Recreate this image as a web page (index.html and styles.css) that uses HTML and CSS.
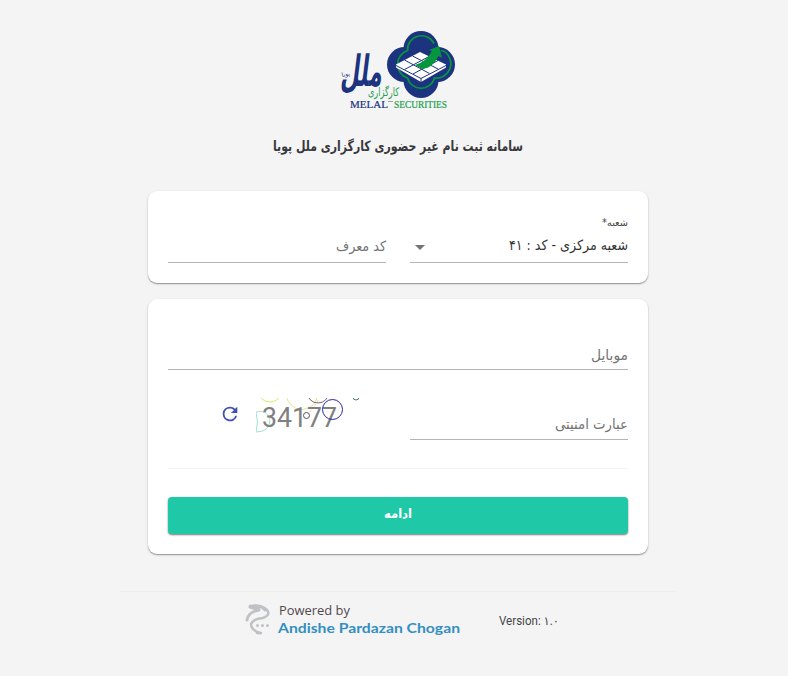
FILE: index.html
```html
<!DOCTYPE html>
<html lang="fa" dir="rtl">
<head>
<meta charset="utf-8">
<title>سامانه ثبت نام غیر حضوری</title>
<link rel="stylesheet" href="styles.css">
</head>
<body>
<main class="page">
  <header class="header">
    <svg class="logo" viewBox="0 0 116 80" width="116" height="80" direction="ltr">
      <g fill="#1c3480">
        <circle cx="81" cy="18.500" r="17.500"/><circle cx="64.500" cy="34.500" r="17.500"/><circle cx="97.500" cy="34.500" r="17.500"/><circle cx="81" cy="50.500" r="17.500"/>
        <rect x="65" y="19" width="32" height="32"/>
      </g>
      <path d="M94 13.500A14 14 0 0 0 67.500 20.500A14.500 14.500 0 0 0 67.500 48A14 14 0 0 0 94.500 48A14.500 14.500 0 0 0 110 29Q107 21 101 20.500" fill="none" stroke="#06963e" stroke-width="1.700"/>
      <path d="M56 34.500L80 22L106 34.500V37.500L81 52L56 37.500Z" fill="#fff"/>
      <path d="M64.500 30L89.500 43.500M72.500 26L98 39M64.500 39.500L89 26.500M73 44L98 30.500M56 35.500L81 48.500L106 35.500M81 48.500V52" stroke="#1c3480" stroke-width="1" fill="none"/>
      <path d="M75 35Q86 32 92 21L89 20L99 16L102 28L98.500 26Q92 39 82 39Z" fill="#06963e"/>
      <text class="logo-mark" transform="translate(0 56) skewX(-7) scale(.85 1.600)" textLength="49" lengthAdjust="spacingAndGlyphs">ملل</text>
      <text class="logo-sub" x="2" y="47" transform="rotate(-12 2 47)">پویا</text>
      <text class="logo-broker" x="28" y="66" textLength="31" lengthAdjust="spacingAndGlyphs">کارگزاری</text>
      <text class="logo-latin blue" x="10" y="78" textLength="38" lengthAdjust="spacingAndGlyphs">MELAL</text>
      <text class="logo-latin green" x="54" y="78" textLength="53" lengthAdjust="spacingAndGlyphs">SECURITIES</text>
      <path d="M48 71.500h5" stroke="#8c91a0" stroke-width=".8"/>
    </svg>
    <h1 class="title"><svg width="252" height="28" direction="ltr"><text x="1" y="18" textLength="250" lengthAdjust="spacingAndGlyphs">سامانه ثبت نام غیر حضوری کارگزاری ملل پویا</text></svg></h1>
  </header>

  <section class="card branch-card">
    <div class="field">
      <svg class="label" width="28" height="18" direction="rtl"><text x="28" y="13" textLength="26" lengthAdjust="spacingAndGlyphs">شعبه*</text></svg>
      <div class="control">
        <svg width="120" height="26" direction="rtl"><text x="120" y="17" textLength="119" lengthAdjust="spacingAndGlyphs">شعبه مرکزی - کد : ۴۱</text></svg>
        <i class="arrow"></i>
      </div>
    </div>
    <div class="field">
      <div class="control hint"><svg width="50" height="26" direction="ltr"><text x="0" y="18" textLength="50" lengthAdjust="spacingAndGlyphs">کد معرف</text></svg></div>
    </div>
  </section>

  <section class="card login-card">
    <div class="control hint"><svg width="38" height="26" direction="ltr"><text x="1" y="18" textLength="37" lengthAdjust="spacingAndGlyphs">موبایل</text></svg></div>
    <div class="security">
      <div class="control hint"><svg width="73" height="26" direction="ltr"><text x="0" y="17" textLength="73" lengthAdjust="spacingAndGlyphs">عبارت امنیتی</text></svg></div>
      <div class="captcha">
        <svg class="refresh" width="22" height="22" viewBox="0 0 24 24"><path fill="#3f51b5" d="M17.650 6.350A7.960 7.960 0 0 0 12 4a8 8 0 1 0 7.730 10h-2.080A6 6 0 1 1 12 6c1.660 0 3.140.690 4.220 1.780L13 11h7V4z"/></svg>
        <svg class="captcha-art" width="120" height="38" viewBox="0 0 120 38">
          <g fill="none">
            <circle cx="14" cy="-8" r="12" stroke="#d3ec6b"/>
            <circle cx="46" cy="-4" r="15.500" stroke="#dfec8d"/>
            <circle cx="62" cy="-6" r="11" stroke="#806471"/>
            <path d="M0 14Q10 11 14 21Q14 34 0 34Q3 24 0 14" stroke="#a4e2cd"/>
            <path d="M54 14L63 1" stroke="#f4c0a0" stroke-dasharray="2 2"/>
            <circle cx="100" cy="-1" r="3" stroke="#55717c"/>
          </g>
          <text x="6" y="29" class="captcha-code" textLength="75" lengthAdjust="spacingAndGlyphs">34177</text>
          <circle cx="50.500" cy="17.500" r="3" fill="none" stroke="#555"/>
          <circle cx="76.500" cy="11.500" r="10" fill="none" stroke="#2525a8"/>
        </svg>
      </div>
    </div>
    <hr class="divider">
    <button class="submit"><svg width="30" height="24" direction="ltr"><text x="1" y="16" textLength="28" lengthAdjust="spacingAndGlyphs">ادامه</text></svg></button>
  </section>

  <footer class="footer" dir="ltr">
    <svg class="brand" width="216" height="36" viewBox="0 0 216 36">
      <g fill="none" stroke="#bfc1c6" stroke-linecap="round" stroke-linejoin="round">
        <path d="M5 4Q16 2 22 8Q26 13 18 16Q8 17 6 22Q6 28 15 31" stroke-width="2.500"/>
        <path d="M2 18Q3 10 14 8L5 5L17 5L20 8" stroke-width="3"/>
        <path d="M12 31h4" stroke-width="2.500"/>
      </g>
      <g fill="#bfc1c6"><circle cx="12.500" cy="23.500" r="1.500"/><circle cx="17.500" cy="23.500" r="1.500"/><circle cx="22.500" cy="23.500" r="1.500"/></g>
      <text class="powered" x="34" y="13" textLength="71" lengthAdjust="spacingAndGlyphs">Powered by</text>
      <text class="company" x="33" y="31" textLength="182" lengthAdjust="spacingAndGlyphs">Andishe Pardazan Chogan</text>
    </svg>
    <svg class="version" width="62" height="20"><text x="0" y="13" textLength="60" lengthAdjust="spacingAndGlyphs">Version: ۱.۰</text></svg>
  </footer>
</main>
</body>
</html>
```
FILE: styles.css
```css
* { box-sizing: border-box; }
body { margin: 0; background: #f4f4f4; font-family: Roboto, "DejaVu Sans", sans-serif; color: #333; }
svg { display: block; overflow: visible; }
svg text { fill: currentColor; }
.page { width: 556px; height: 676px; margin-left: auto; margin-right: 112px; }
.header { height: 191px; padding-top: 30px; display: flex; flex-direction: column; align-items: center; }
.title { margin: 23px 0 0; color: #38383d; font: bold 14px "DejaVu Sans", sans-serif; }
.card { width: 500px; margin: 0 auto; padding: 0 20px; background: #fff; border-radius: 9px; box-shadow: 0 1px 1px #777a, 0 1px 3px #0002; }
.branch-card { height: 92px; display: flex; gap: 24px; }
.field { width: 218px; height: 72px; display: flex; flex-direction: column; justify-content: flex-end; }
.label { margin-bottom: 2px; color: #444; font: 10px "DejaVu Sans", sans-serif; }
.control { width: 100%; height: 30px; display: flex; align-items: flex-start; justify-content: space-between; border-bottom: 1px solid #b5b5b5; font: 14px "DejaVu Sans", sans-serif; }
.hint { color: #737373; }
.arrow { margin: 12px 0 0 5px; border-left: 5px solid transparent; border-right: 5px solid transparent; border-top: 5px solid #757575; }
.login-card { height: 255px; margin-top: 16px; padding-top: 43px; }
.login-card > .control { height: 28px; }
.security { height: 70px; display: flex; gap: 24px; align-items: flex-end; }
.security > .control { width: 218px; height: 28px; }
.captcha { width: 218px; height: 42px; display: flex; direction: ltr; align-items: flex-start; padding-left: 51px; }
.refresh { margin: 5px 15px 0 0; }
.captcha-art { overflow: hidden; }
.captcha-code { font: 28px Roboto, sans-serif; fill: #808080; }
.divider { height: 1px; margin: 28px 0; border: 0; background: #f4f4f4; }
.submit { width: 100%; height: 37px; padding: 5px 0 0; display: flex; justify-content: center; align-items: flex-start; border: 0; border-radius: 4px; background: #1fc8a7; color: #fff; box-shadow: 0 1px 2px #0008; font: bold 13px "DejaVu Sans", sans-serif; }
.footer { height: 45px; margin-top: 37px; padding: 10px 0 0 125px; border-top: 1px solid #eee; display: flex; align-items: flex-start; }
.version { margin: 10px 0 0 38px; color: #454545; font: 12px Roboto, "DejaVu Sans", sans-serif; }
.powered { font: 12px "Open Sans", sans-serif; fill: #51494b; }
.company { font: bold 14px Lato, sans-serif; fill: #338fc1; }
.logo-mark { font: bold 27px "DejaVu Sans", sans-serif; fill: #1c3480; }
.logo-sub { font: 6px "DejaVu Sans", sans-serif; fill: #1c3480; }
.logo-broker { font: 12px "DejaVu Sans", sans-serif; fill: #16a04b; }
.logo-latin { font: 10px "Liberation Serif", serif; }
.blue { fill: #1c3480; stroke: #1c3480; stroke-width: .2; }
.green { fill: #16a04b; stroke: #16a04b; stroke-width: .2; }
```
